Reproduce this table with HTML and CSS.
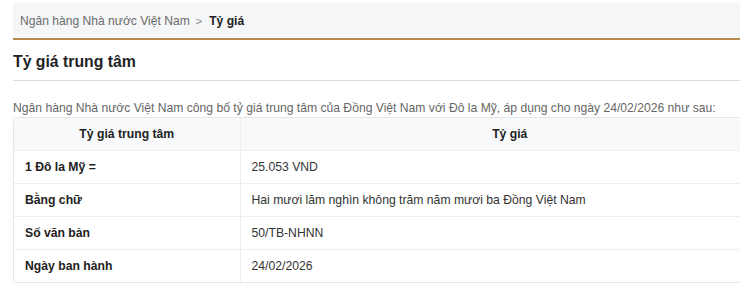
FILE: index.html
```html
<!DOCTYPE html>
<html lang="vi">
<head>
<meta charset="utf-8">
<link rel="stylesheet" href="styles.css">
</head>
<body>
<div class="page">
  <nav class="crumbs">
    <span class="crumb-link">Ngân hàng Nhà nước Việt Nam</span>
    <span class="crumb-sep">&gt;</span>
    <span class="crumb-current">Tỷ giá</span>
  </nav>
  <h1 class="title">Tỷ giá trung tâm</h1>
  <p class="intro">Ngân hàng Nhà nước Việt Nam công bố tỷ giá trung tâm của Đồng Việt Nam với Đô la Mỹ, áp dụng cho ngày 24/02/2026 như sau:</p>
  <div class="table-wrap">
    <table class="rates">
      <thead>
        <tr><th class="col-label">Tỷ giá trung tâm</th><th>Tỷ giá</th></tr>
      </thead>
      <tbody>
        <tr><td class="label">1 Đô la Mỹ =</td><td>25.053 VND</td></tr>
        <tr><td class="label">Bằng chữ</td><td>Hai mươi lăm nghìn không trăm năm mươi ba Đồng Việt Nam</td></tr>
        <tr><td class="label">Số văn bản</td><td>50/TB-NHNN</td></tr>
        <tr><td class="label">Ngày ban hành</td><td>24/02/2026</td></tr>
      </tbody>
    </table>
  </div>
</div>
</body>
</html>
```

FILE: styles.css
```css
* { box-sizing: border-box; }
html, body { margin: 0; padding: 0; background: #fff; }
body {
  font-family: "Liberation Sans", Arial, sans-serif;
  color: #222;
  overflow: hidden;
}
.page {
  padding: 3px 0 0 13px;
  width: 780px;
}
.crumbs {
  height: 37px;
  background: #f5f6f8;
  border-bottom: 2px solid #b68a4c;
  display: flex;
  align-items: center;
  padding-left: 7px;
  font-size: 12.1px;
}
.crumb-link { color: #6b6b6b; }
.crumb-sep { color: #888; margin: 0 7px 0 6px; font-size: 11px; }
.crumb-current { font-weight: bold; color: #222; }
.title {
  margin: 0;
  padding: 12px 0 9px;
  font-size: 15.8px;
  font-weight: bold;
  color: #222;
  border-bottom: 1px solid #dcdcdc;
  line-height: 19px;
}
.intro {
  margin: 19px 0 0;
  font-size: 12.15px;
  color: #666;
  line-height: 16px;
}
.table-wrap {
  margin-top: 1px;
  border: 1px solid #e6e6e6;
  border-radius: 4px;
  overflow: hidden;
  box-shadow: 0 1px 2px rgba(0,0,0,0.04);
}
.rates {
  width: 100%;
  border-collapse: collapse;
  font-size: 12.2px;
}
.rates th, .rates td {
  height: 33px;
  padding: 0 11px;
  border-bottom: 1px solid #eeeeee;
  text-align: left;
  color: #333;
}
.rates tr:last-child td { border-bottom: none; }
.rates th {
  height: 32px;
  background: #f8f9fa;
  text-align: center;
  font-weight: bold;
  color: #222;
}
.rates th:first-child, .rates td:first-child {
  width: 226px;
  border-right: 1px solid #eeeeee;
}
.rates td.label { font-weight: bold; color: #222; }
```
